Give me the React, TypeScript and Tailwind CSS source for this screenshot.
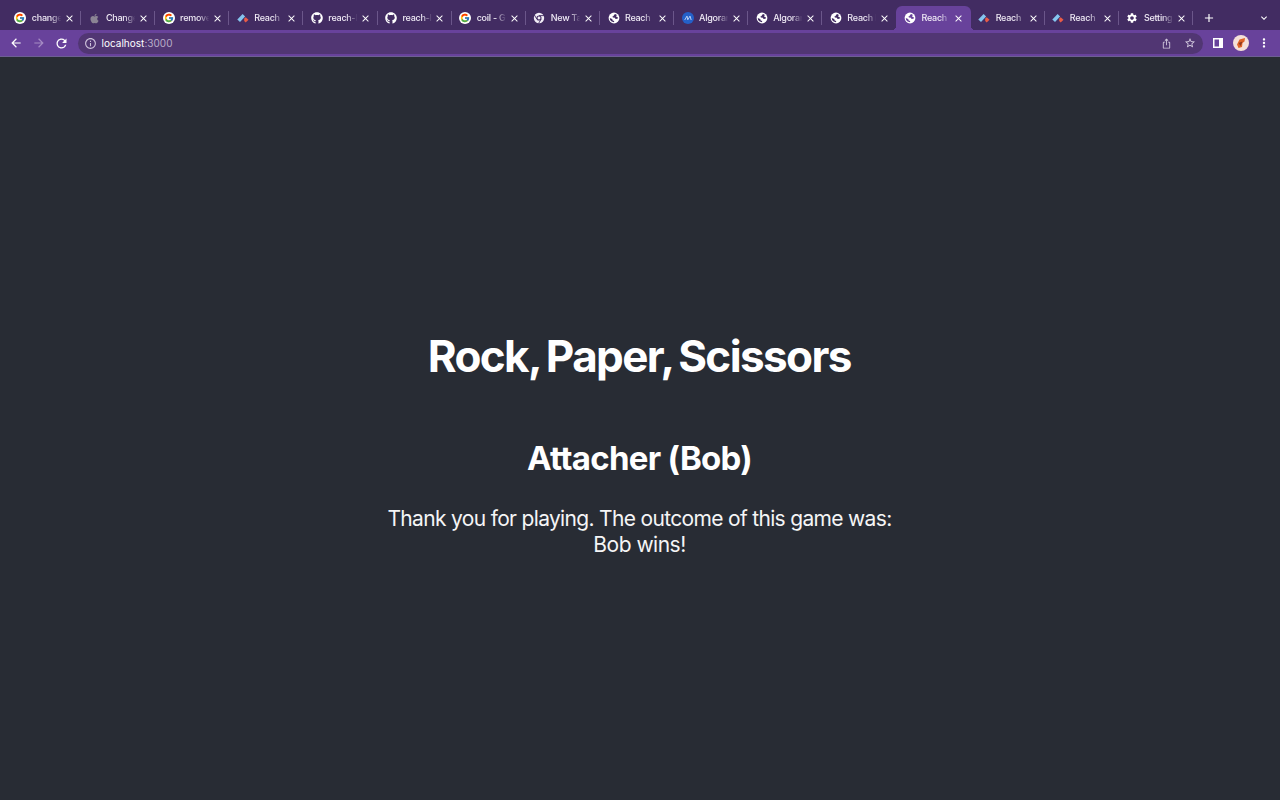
import React from "react";
import { FaApple, FaGithub } from "react-icons/fa";
import { FcGoogle } from "react-icons/fc";
import { MdArrowBack, MdArrowForward, MdRefresh, MdInfoOutline, MdSettings, MdStarBorder, MdIosShare, MdMoreVert, MdAdd, MdClose, MdKeyboardArrowDown } from "react-icons/md";

type Kind = "google" | "apple" | "reach" | "github" | "chrome" | "globe" | "algorand" | "settings";

const tabs: { kind: Kind; label: string; active?: boolean }[] = [
  { kind: "google", label: "change" },
  { kind: "apple", label: "Change" },
  { kind: "google", label: "remove" },
  { kind: "reach", label: "Reach" },
  { kind: "github", label: "reach-l" },
  { kind: "github", label: "reach-l" },
  { kind: "google", label: "coil - G" },
  { kind: "chrome", label: "New Ta" },
  { kind: "globe", label: "Reach" },
  { kind: "algorand", label: "Algorar" },
  { kind: "globe", label: "Algorar" },
  { kind: "globe", label: "Reach I" },
  { kind: "globe", label: "Reach", active: true },
  { kind: "reach", label: "Reach" },
  { kind: "reach", label: "Reach" },
  { kind: "settings", label: "Setting" },
];

function Favicon({ kind, active }: { kind: Kind; active?: boolean }) {
  switch (kind) {
    case "google":
      return (
        <span className="flex size-3 items-center justify-center rounded-full bg-white">
          <FcGoogle className="size-[10px]" />
        </span>
      );
    case "apple":
      return <FaApple className="size-[11px] text-[#8b8494]" />;
    case "github":
      return <FaGithub className="size-3 text-white" />;
    case "chrome":
      return (
        <svg viewBox="0 0 12 12" className="size-3">
          <circle cx="6" cy="6" r="5.2" fill="#f1edf6" />
          <circle cx="6" cy="6" r="2" fill="#f1edf6" stroke="#422c62" strokeWidth="1.1" />
          <path d="M6 3.6H11M3.9 7.2 1.4 3M8.1 7.2 5.6 11.4" stroke="#422c62" strokeWidth="0.9" />
        </svg>
      );
    case "globe":
      return (
        <svg viewBox="0 0 12 12" className="ml-px size-3 shrink-0">
          <circle cx="6" cy="6" r="5.4" fill="white" />
          <path
            d="M7.1 1.9 6 2.9 5.6 4.1 4.4 4.5 4.9 5.6 6.9 5.7 7.5 6.9 9.6 6.7 9.9 5.3 8.6 5.1 8.1 4 9 3ZM1.8 6.1 4.2 7 4.7 8.4 6.2 9 6 10.2 3.7 9.6 2.1 8Z"
            className={active ? "fill-[#68429b]" : "fill-[#422c62]"}
          />
        </svg>
      );
    case "settings":
      return <MdSettings className="size-3 text-white" />;
    case "algorand":
      return (
        <svg viewBox="0 0 12 12" className="ml-px size-3 shrink-0">
          <circle cx="6" cy="6" r="6" fill="#2460c8" />
          <path d="M2.7 8 5 4.1 5.8 7.8 8 4.1 9.2 8" fill="none" stroke="#dce8ff" strokeWidth=".8" />
        </svg>
      );
    default:
      return (
        <svg viewBox="0 0 12 12" className="size-3">
          <path d="M.3 7.6 5.6 1.9 8.1 4.5 3 10Z" fill="#85c5ee" />
          <path d="M8.7 5.2 11.5 7.7 8.7 10.5 7.2 9V6.6Z" fill="#e95b47" />
        </svg>
      );
  }
}

export default function App() {
  return (
    <div className="flex h-[800px] w-[1280px] flex-col overflow-hidden bg-[#282c34] font-['Inter','Liberation_Sans',sans-serif] text-white">
      <div className="flex h-[30px] shrink-0 items-end bg-[#422c62] pl-[6.8px]">
        {tabs.map((tab, i) => {
          const divider = !tab.active && !tabs[i + 1]?.active;
          return (
            <div
              key={i}
              className={`relative flex h-6 w-[74.15px] shrink-0 items-center pl-[7.5px] ${tab.active ? "rounded-t-[6px] bg-[#68429b]" : ""}`}
            >
              {tab.active && (
                <>
                  <span className="absolute bottom-0 -left-1 size-1 bg-[radial-gradient(circle_at_0_0,transparent_4px,#68429b_4.3px)]" />
                  <span className="absolute -right-1 bottom-0 size-1 bg-[radial-gradient(circle_at_100%_0,transparent_4px,#68429b_4.3px)]" />
                </>
              )}
              <span className="flex size-3 shrink-0 items-center justify-center">
                <Favicon kind={tab.kind} active={tab.active} />
              </span>
              <span className="ml-[5.5px] w-[30px] overflow-hidden whitespace-nowrap text-[9px] leading-3 font-medium tracking-[-0.25px] text-[#f0ebf6] [mask-image:linear-gradient(to_right,black_62%,transparent_98%)]">
                {tab.label}
              </span>
              <MdClose className="ml-[1.9px] size-[11px] shrink-0 text-white" />
              {divider && <span className="absolute top-[5px] right-0 h-[14px] w-px bg-[#6b568a]" />}
            </div>
          );
        })}
        <div className="flex h-6 flex-1 items-center justify-between pr-[10px] pl-[8.5px]">
          <MdAdd className="size-[14px]" />
          <MdKeyboardArrowDown className="size-3" />
        </div>
      </div>
      <div className="flex h-[27px] shrink-0 items-center border-b border-[#6d5f93] bg-[#68429b] pl-[9px]">
        <MdArrowBack className="size-[14px]" />
        <MdArrowForward className="ml-[9px] size-[14px] text-[#a58bc4]" />
        <MdRefresh className="ml-[8px] size-[15px]" />
        <div className="ml-[9px] flex h-[21px] w-[1125px] items-center rounded-full bg-[#513673] pl-[6px]">
          <MdInfoOutline className="size-[13px] text-[#cdc2da]" />
          <span className="ml-[4.5px] text-[10px] leading-3 tracking-[0.02px]">
            localhost<span className="text-[#b9adc8]">:3000</span>
          </span>
          <MdIosShare className="ml-auto size-[11px] text-[#cfc5db]" />
          <MdStarBorder className="mr-[7px] ml-3 size-3 text-[#dcd4e6]" />
        </div>
        <svg viewBox="0 0 10 10" className="ml-[10px] size-[10px] shrink-0">
          <path fill="white" fillRule="evenodd" d="M0 0H10V10H0ZM1.5 1.5V8.5H6V1.5Z" />
        </svg>
        <svg viewBox="0 0 16 16" className="ml-[10px] size-4 shrink-0">
          <circle cx="8" cy="8" r="8" fill="#f5e1d8" />
          <path d="M6.5 4.5 12 3 11.5 6.5 9.5 8 9 12 5.5 13 4 9.5Z" fill="#df6428" />
          <path d="M5.5 8 9.5 6.5 8.5 9 7.5 11Z" fill="#8c3a1e" />
        </svg>
        <MdMoreVert className="ml-2 size-[14px] shrink-0" />
      </div>
      <main className="flex flex-1 flex-col items-center pt-[270px] text-center">
        <h1 className="mr-[1.5px] text-[44px] leading-[58px] font-bold tracking-[-1.6px] [word-spacing:-2.8px]">Rock, Paper, Scissors</h1>
        <h2 className="mt-[53px] mr-px text-[33px] leading-[40px] font-bold tracking-[-0.7px] [font-feature-settings:'calt'_0]">Attacher (Bob)</h2>
        <p className="mt-[28px] mr-px text-[21px] leading-[26px] tracking-[-0.67px] text-[#f5f5f6]">
          Thank you for playing. The outcome of this game was:
          <br />
          <span className="tracking-[-0.5px]">Bob wins!</span>
        </p>
      </main>
    </div>
  );
}
